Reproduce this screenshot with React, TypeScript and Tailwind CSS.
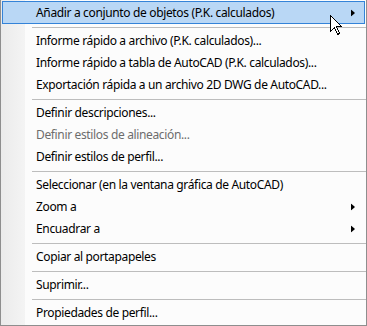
import React from "react";

type Item =
  | { kind: "sep" }
  | { kind: "item"; label: string; disabled?: boolean; submenu?: boolean; active?: boolean };

const items: Item[] = [
  { kind: "item", label: "Añadir a conjunto de objetos (P.K. calculados)", submenu: true, active: true },
  { kind: "sep" },
  { kind: "item", label: "Informe rápido a archivo (P.K. calculados)..." },
  { kind: "item", label: "Informe rápido a tabla de AutoCAD (P.K. calculados)..." },
  { kind: "item", label: "Exportación rápida a un archivo 2D DWG de AutoCAD..." },
  { kind: "sep" },
  { kind: "item", label: "Definir descripciones..." },
  { kind: "item", label: "Definir estilos de alineación...", disabled: true },
  { kind: "item", label: "Definir estilos de perfil..." },
  { kind: "sep" },
  { kind: "item", label: "Seleccionar (en la ventana gráfica de AutoCAD)" },
  { kind: "item", label: "Zoom a", submenu: true },
  { kind: "item", label: "Encuadrar a", submenu: true },
  { kind: "sep" },
  { kind: "item", label: "Copiar al portapapeles" },
  { kind: "sep" },
  { kind: "item", label: "Suprimir..." },
  { kind: "sep" },
  { kind: "item", label: "Propiedades de perfil..." },
];

function SubArrow({ className }: { className: string }) {
  return (
    <svg width="4" height="7" viewBox="0 0 4 7" className={className}>
      <polygon points="0,0 4,3.5 0,7" fill="#000" />
    </svg>
  );
}

function Cursor() {
  return (
    <svg
      width="13"
      height="21"
      viewBox="0 0 13 21"
      className="absolute left-[329px] top-[15px]"
      shapeRendering="crispEdges"
    >
      <path
        d="M0.5 0.5 L0.5 16.5 L4.5 12.5 L7.5 19.5 L9.5 18.5 L6.5 11.5 L11.5 11.5 Z"
        fill="#fff"
        stroke="#000"
        strokeWidth="1"
        strokeLinejoin="miter"
      />
    </svg>
  );
}

export default function App() {
  return (
    <div className="w-[367px] h-[326px] relative overflow-hidden border-x border-b border-[#8e8e8e] bg-[linear-gradient(to_right,#ebebeb_0px,#f4f4f4_24px,#fcfcfc_24px)] font-['Noto_Sans',sans-serif] text-[12px] tracking-[-0.35px] text-black">
      <div className="flex flex-col py-px">
        {items.map((it, i) => {
          if (it.kind === "sep") {
            return (
              <div key={i} className="h-[6px] flex items-center pl-[31px]">
                <div className="h-px w-full bg-[#bdbdbd]" />
              </div>
            );
          }
          if (it.active) {
            return (
              <div
                key={i}
                className="relative mx-px h-[23px] flex items-center pl-[33px] border border-[#3483d8] bg-[#b9d7f5] whitespace-nowrap"
              >
                {it.label}
                <SubArrow className="absolute right-[9px] top-1/2 -translate-y-1/2" />
              </div>
            );
          }
          return (
            <div
              key={i}
              className={
                "relative h-[22px] flex items-center pl-[35px] whitespace-nowrap " +
                (it.disabled ? "text-[#6d6d6d]" : "text-black")
              }
            >
              {it.label}
              {it.submenu && (
                <SubArrow className="absolute right-[11px] top-1/2 -translate-y-1/2" />
              )}
            </div>
          );
        })}
      </div>
      <Cursor />
    </div>
  );
}
